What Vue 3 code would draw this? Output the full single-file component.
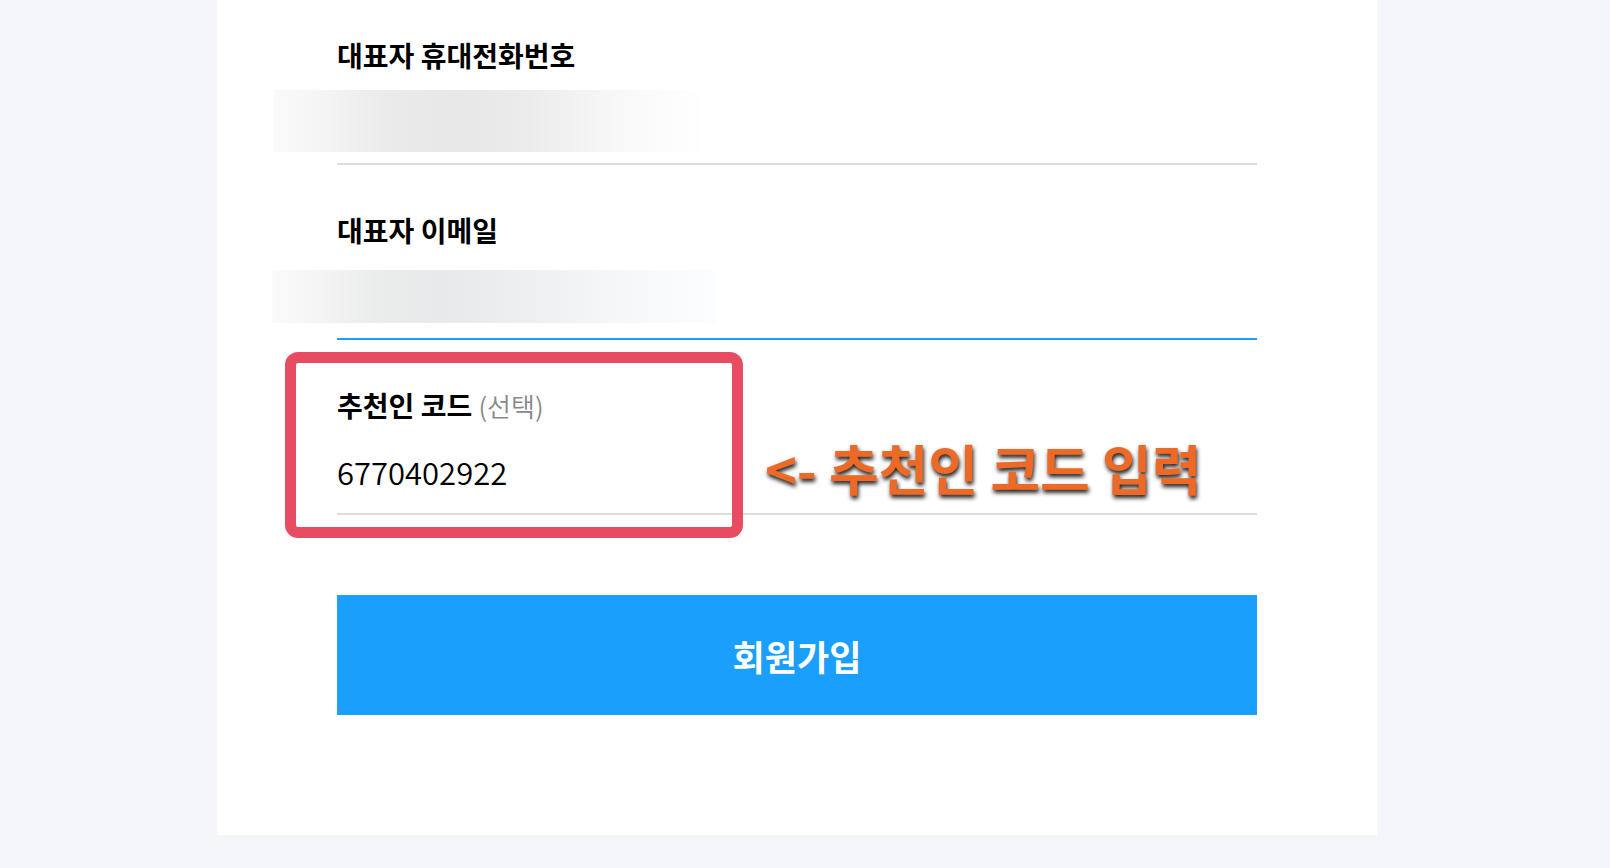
<script setup>
import { ref } from 'vue'

const phone = ref('')
const email = ref('')
const code = ref('6770402922')
</script>

<template>
  <div class="page">
    <main class="card">
      <form @submit.prevent>
        <div class="field">
          <label for="phone">대표자 휴대전화번호</label>
          <input id="phone" v-model="phone" type="tel" />
          <div class="mask mask-phone" aria-hidden="true"></div>
        </div>

        <div class="field">
          <label for="email">대표자 이메일</label>
          <input id="email" v-model="email" class="active" type="email" />
          <div class="mask mask-email" aria-hidden="true"></div>
        </div>

        <div class="field">
          <label for="code">추천인 코드 <span class="optional">(선택)</span></label>
          <input id="code" v-model="code" type="text" />
          <div class="highlight" aria-hidden="true"></div>
          <p class="note">&lt;- 추천인 코드 입력</p>
        </div>

        <button type="submit">회원가입</button>
      </form>
    </main>
  </div>
</template>

<style>
body {
  margin: 0;
  background: #f4f6fa;
}
</style>

<style scoped>
.page {
  padding: 0 16px 33px 0;
  background: #f4f6fa;
  font-family: "Noto Sans CJK KR", "Noto Sans", sans-serif;
  color: #000;
}

.card {
  box-sizing: border-box;
  max-width: 1160px;
  margin: 0 auto;
  padding: 36px 120px 120px;
  background: #fff;
}

form {
  display: flex;
  flex-direction: column;
}

.field {
  position: relative;
  display: flex;
  flex-direction: column;
  gap: 10px;
}

.field + .field {
  margin-top: 46px;
}

label {
  font-size: 28px;
  line-height: 38px;
  font-weight: 700;
}

.optional {
  font-size: 26px;
  line-height: 1;
  font-weight: 350;
  color: #888;
}

input {
  box-sizing: border-box;
  width: 100%;
  height: 81px;
  padding: 0 0 4px;
  border: 0;
  border-bottom: 2px solid #ddd;
  border-radius: 0;
  outline: 0;
  background: transparent;
  color: #000;
  font-family: inherit;
  font-size: 31px;
  font-weight: 350;
}

input.active {
  border-bottom-color: #1b9ffc;
}

.mask {
  position: absolute;
}

.mask-phone {
  top: 54px;
  left: -63px;
  width: 426px;
  height: 62px;
  background: linear-gradient(90deg, #fafafa 0, #f4f4f4 12%, #ebebeb 26%, #e7e7e7 43%, #ececec 60%, #f5f5f5 76%, #fbfbfb 88%, #fefefe 100%);
}

.mask-email {
  top: 59px;
  left: -65px;
  width: 444px;
  height: 53px;
  background: linear-gradient(90deg, #fafafa 0, #f3f4f3 11%, #ebecec 23%, #e8e9ea 38%, #eeeff0 58%, #f5f6f8 76%, #fafcfe 95%, #fcfdff 100%);
}

.highlight {
  position: absolute;
  top: -34px;
  left: -52px;
  box-sizing: border-box;
  width: 458px;
  height: 186px;
  border: 11px solid rgba(230, 62, 86, 0.93);
  border-radius: 13px;
  pointer-events: none;
}

.note {
  position: absolute;
  top: 42px;
  left: 428px;
  margin: 0;
  color: #ec6a25;
  font-size: 54px;
  line-height: 80px;
  font-weight: 700;
  white-space: nowrap;
  text-shadow: 1px 3px 4px rgba(0, 0, 0, 0.9);
  pointer-events: none;
}

button {
  height: 120px;
  margin-top: 80px;
  padding: 0;
  border: 0;
  background: #1b9ffc;
  color: #fff;
  font-family: inherit;
  font-size: 35px;
  font-weight: 700;
}
</style>
